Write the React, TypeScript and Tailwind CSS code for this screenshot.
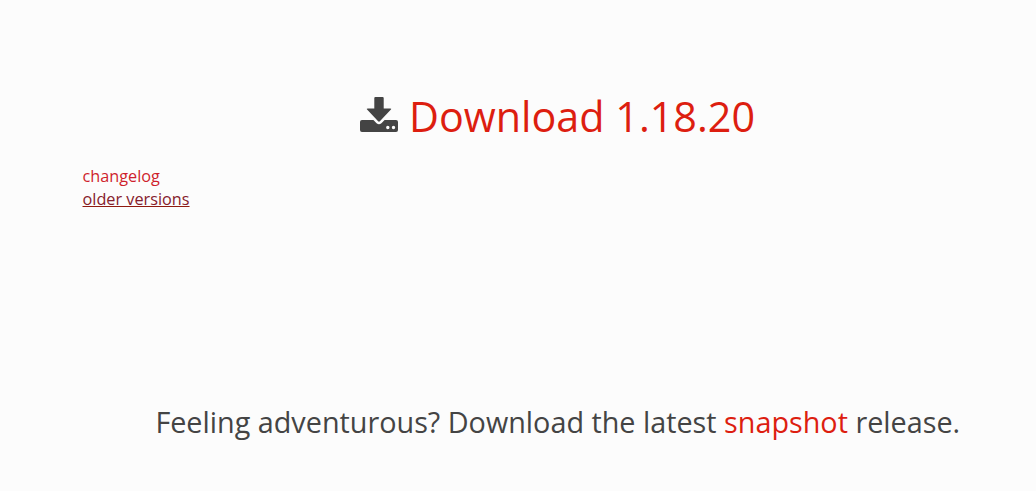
export default function App() {
  return (
    <main className="h-[491px] overflow-hidden bg-[#fcfcfc] pl-[82.5px] pr-[3px] text-[16px] text-[#444444] font-['Open_Sans',sans-serif]">
      <h1 className="flex h-[56px] mt-[88px] items-center justify-center whitespace-nowrap text-[41.3px] leading-[56px] font-normal">
        <DownloadIcon />
        <a className="ml-[10.5px] text-[#dd1e10]">Download 1.18.20</a>
      </h1>
      <nav className="mt-[21px] flex flex-col items-start text-[16.25px] leading-[23px]">
        <a className="text-[#cf1f2c]">changelog</a>
        <a className="text-[#85202c] underline decoration-[#8f1a10]">older versions</a>
      </nav>
      <p className="mt-[189px] text-center text-[28.77px] leading-[44px] whitespace-nowrap">
        Feeling adventurous? Download the latest <a className="text-[#dd1e10]">snapshot</a> release.
      </p>
    </main>
  );
}

function DownloadIcon() {
  return (
    <svg viewBox="0 0 38 35" className="mb-[3px] h-[35px] w-[38px] shrink-0" fill="currentColor">
      <path d="M15.4 0H22.6Q23.7 0 23.7 1.1V11.4H30Q32 11.4 30.7 12.8L20.1 24.1Q19 25.2 17.9 24.1L7.3 12.8Q6 11.4 8 11.4H14.3V1.1Q14.3 0 15.4 0Z" />
      <path
        fillRule="evenodd"
        d="M2 23H13.4L16.6 26.2Q19 28.4 21.4 26.2L24.6 23H36Q38 23 38 25V33Q38 35 36 35H2Q0 35 0 33V25Q0 23 2 23ZM29.5 30.5a1.7 1.7 0 1 0-3.4 0a1.7 1.7 0 1 0 3.4 0ZM35.2 30.5a1.7 1.7 0 1 0-3.4 0a1.7 1.7 0 1 0 3.4 0Z"
      />
    </svg>
  );
}
